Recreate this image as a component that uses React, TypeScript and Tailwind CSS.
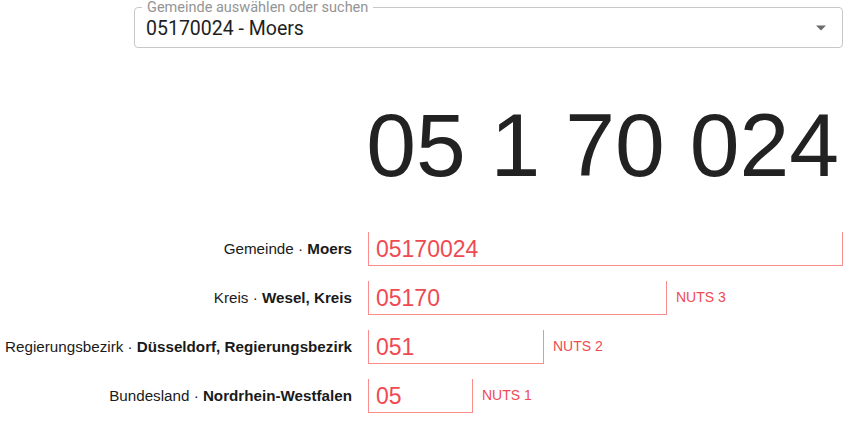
import React from "react";

const rows = [
  { kind: "Gemeinde", name: "Moers", code: "05170024", width: 475, nuts: "" },
  { kind: "Kreis", name: "Wesel, Kreis", code: "05170", width: 299, nuts: "NUTS 3" },
  { kind: "Regierungsbezirk", name: "Düsseldorf, Regierungsbezirk", code: "051", width: 176, nuts: "NUTS 2" },
  { kind: "Bundesland", name: "Nordrhein-Westfalen", code: "05", width: 105, nuts: "NUTS 1" },
];

export default function App() {
  return (
    <div className="w-[850px] h-[422px] bg-white overflow-hidden" style={{ fontFamily: "'Liberation Sans', Arial, sans-serif" }}>
      <div className="pt-[7px] pl-[134px] pr-[7px]">
        <div className="relative h-[41px] border border-[#c8c8c8] rounded-[4px] flex items-center pl-[11px] pr-[16px]">
          <span
            className="absolute -top-[7px] left-[7px] bg-white px-[5px] text-[14.5px] leading-[13px] text-[#949494]"
            style={{ fontFamily: "Roboto, sans-serif" }}
          >
            Gemeinde auswählen oder suchen
          </span>
          <span className="flex-1 text-[19.5px] text-[#1e1e1e] pt-[2px]" style={{ fontFamily: "Roboto, sans-serif" }}>
            05170024 - Moers
          </span>
          <svg width="10" height="6" viewBox="0 0 10 5" className="mt-[1px]">
            <path d="M0 0 L10 0 L5 5 Z" fill="#6b6b6b" />
          </svg>
        </div>
      </div>

      <div className="mt-[53px] pr-[11px] text-right text-[89.5px] leading-none text-[#222222] whitespace-pre">
        05 1 70 024
      </div>

      <div className="mt-[41px] flex flex-col gap-[15px]">
        {rows.map((r) => (
          <div key={r.kind} className="flex items-stretch h-[34px]">
            <div className="w-[352px] shrink-0 flex items-center justify-end text-[15.2px] text-[#1a1a1a] whitespace-nowrap pt-[1px]">
              <span>
                {r.kind} · <b className="font-bold">{r.name}</b>
              </span>
            </div>
            <div
              className="ml-[16px] shrink-0 border-l border-r border-b border-[#fb8d8d] flex items-center pl-[7px] pt-[2px] text-[23px] text-[#ef4a52]"
              style={{ width: r.width }}
            >
              {r.code}
            </div>
            {r.nuts && (
              <div className="ml-[9px] flex items-center text-[14px] text-[#ef4a52] pb-[1px]">{r.nuts}</div>
            )}
          </div>
        ))}
      </div>
    </div>
  );
}
